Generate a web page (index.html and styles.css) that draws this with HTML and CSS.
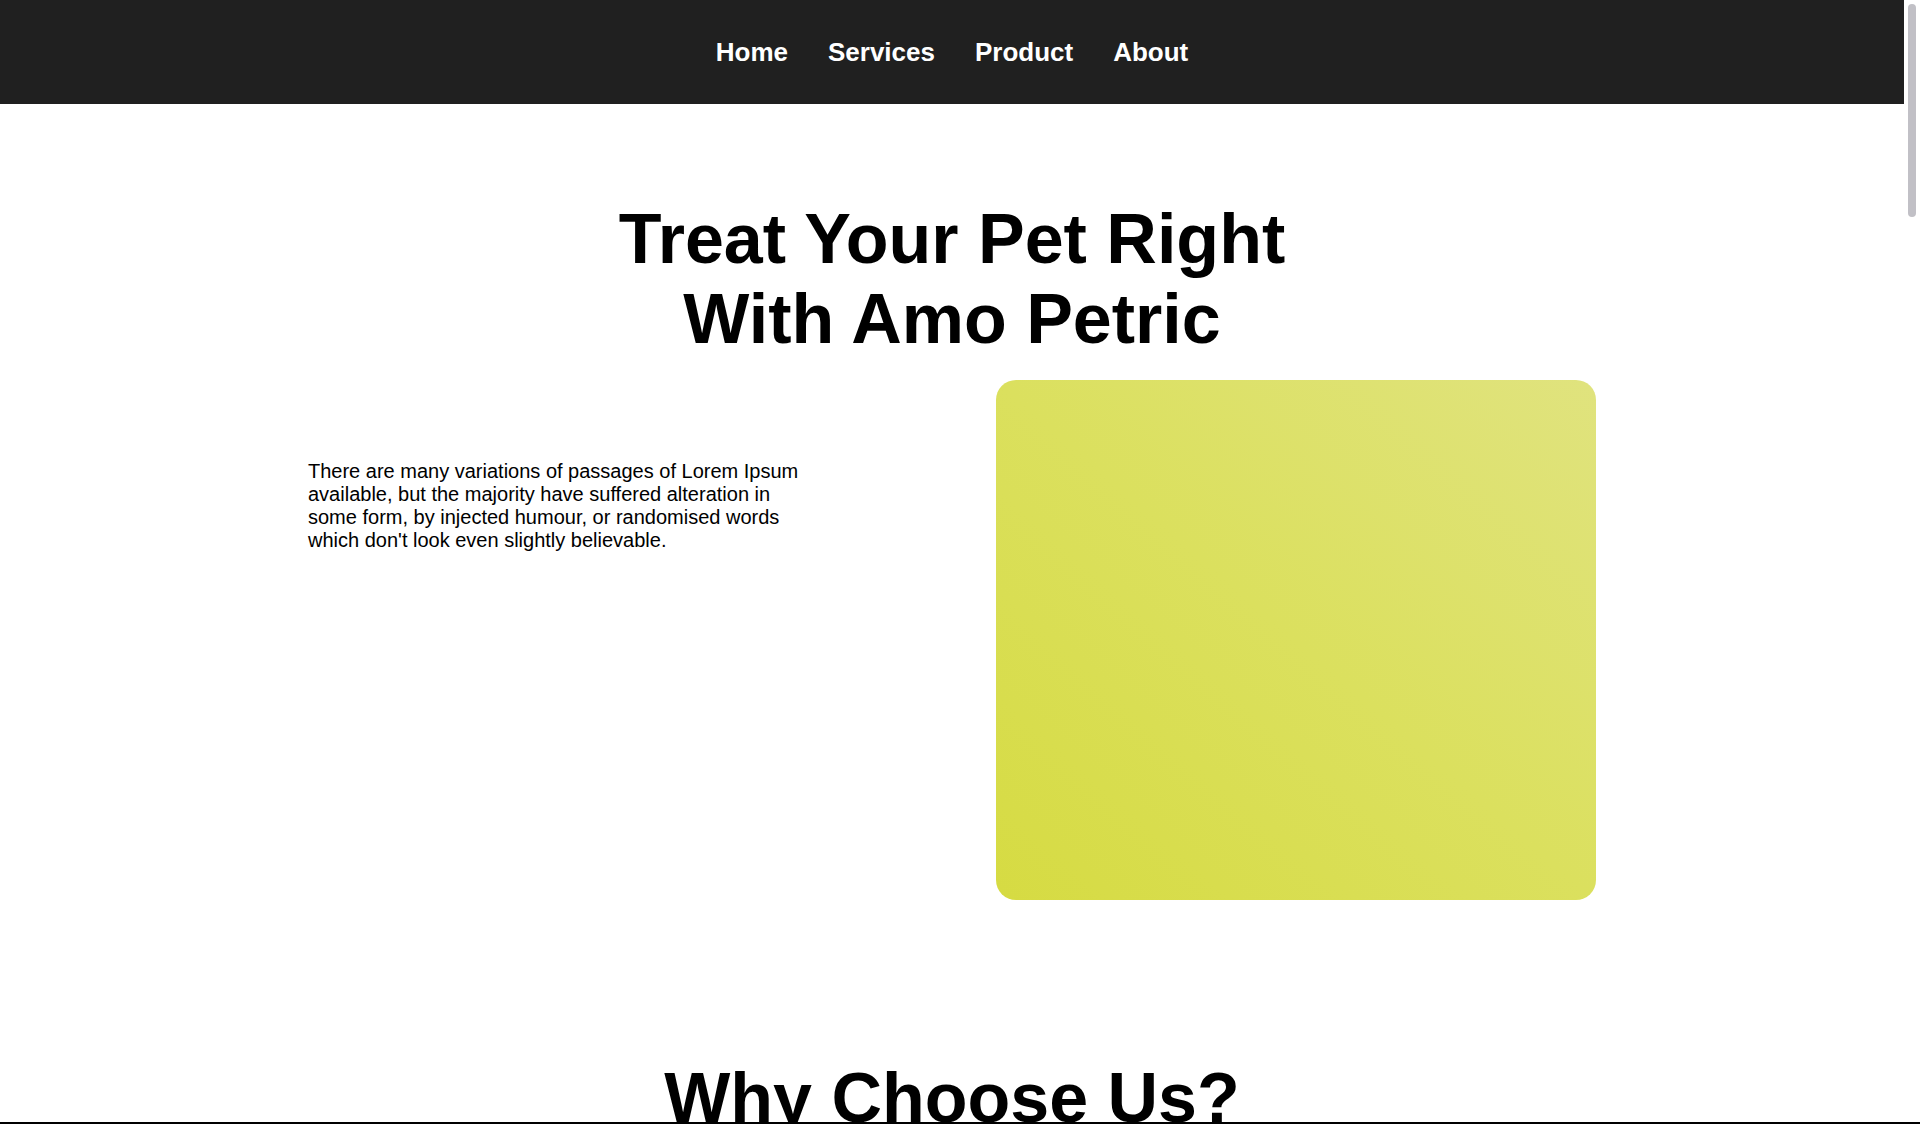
FILE: index.html
```html
<!DOCTYPE html>
<html lang="en">
<head>
<meta charset="utf-8">
<title>Amo Petric</title>
<link rel="stylesheet" href="styles.css">
</head>
<body>
<nav class="topbar">
  <ul class="nav-list">
    <li><a class="nav-link" href="#">Home</a></li>
    <li><a class="nav-link" href="#">Services</a></li>
    <li><a class="nav-link" href="#">Product</a></li>
    <li><a class="nav-link" href="#">About</a></li>
  </ul>
</nav>
<main>
  <section class="hero">
    <h1 class="hero-title">Treat Your Pet Right<br>With Amo Petric</h1>
    <div class="hero-body">
      <p class="hero-text">There are many variations of passages of Lorem Ipsum available, but the majority have suffered alteration in some form, by injected humour, or randomised words which don't look even slightly believable.</p>
      <div class="hero-image"></div>
    </div>
  </section>
  <section class="why">
    <h2 class="why-title">Why Choose Us?</h2>
  </section>
</main>
<div class="scroll-rail"><div class="scroll-thumb"></div></div>
<div class="frame-edge"></div>
</body>
</html>
```

FILE: styles.css
```css
html {
  margin: 0;
}
body {
  margin: 0 16px 0 0;
  font-family: "Liberation Sans", Arial, sans-serif;
  color: #000;
  background: #fff;
}
.topbar {
  height: 104px;
  background: #202020;
  display: flex;
  align-items: center;
  justify-content: center;
}
.nav-list {
  list-style: none;
  margin: 0;
  padding: 0;
  display: flex;
}
.nav-link {
  display: block;
  padding: 0 20px;
  color: #fff;
  font-size: 26px;
  font-weight: 700;
  text-decoration: none;
}
.hero-title {
  margin: 95px 0 0;
  font-size: 70px;
  font-weight: 700;
  line-height: normal;
  text-align: center;
}
.hero-body {
  width: 1288px;
  margin: 21px auto 0;
  display: flex;
  justify-content: space-between;
  align-items: flex-start;
}
.hero-text {
  width: 500px;
  margin: 0;
  padding-top: 80px;
  font-size: 20px;
  line-height: normal;
}
.hero-image {
  width: 600px;
  height: 520px;
  border-radius: 20px;
  background: linear-gradient(to top right, #d6db42 0%, #dbe05e 50%, #e0e37e 100%);
}
.why {
  min-height: 4600px;
}
.why-title {
  margin: 158px 0 0;
  font-size: 70px;
  font-weight: 700;
  line-height: normal;
  text-align: center;
}
.scroll-rail {
  position: fixed;
  top: 0;
  right: 0;
  bottom: 0;
  width: 16px;
  background: #fff;
  padding: 4px;
  box-sizing: border-box;
}
.scroll-thumb {
  width: 8px;
  height: 213px;
  border-radius: 4px;
  background: #c1c0c6;
}
.frame-edge {
  position: fixed;
  left: 0;
  right: 0;
  bottom: 0;
  height: 2px;
  background: #000;
  z-index: 2;
}
```
